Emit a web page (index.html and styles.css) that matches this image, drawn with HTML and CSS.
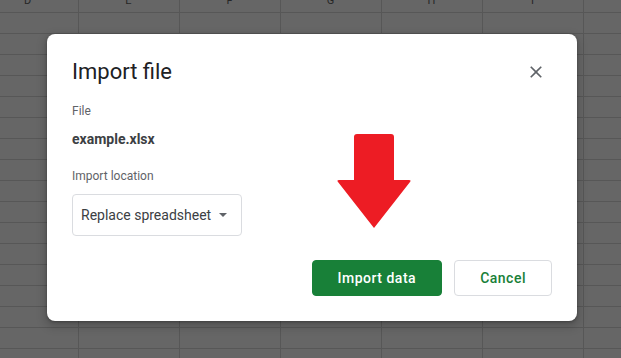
FILE: index.html
```html
<!DOCTYPE html>
<html lang="en">
<head>
    <meta charset="UTF-8">
    <meta name="viewport" content="width=device-width, initial-scale=1.0">
    <title>Import file</title>
    <link rel="stylesheet" href="styles.css">
</head>
<body>
    <div class="sheet">
        <div class="col-headers">
            <div class="col-head">D</div>
            <div class="col-head">E</div>
            <div class="col-head">F</div>
            <div class="col-head">G</div>
            <div class="col-head">H</div>
            <div class="col-head">I</div>
            <div class="col-head">J</div>
        </div>
    </div>

    <div class="dialog">
        <div class="dialog-header">
            <h1>Import file</h1>
            <button class="close-button" aria-label="Close">
                <svg width="20" height="20" viewBox="0 0 24 24" fill="#5f6368">
                    <path d="M19 6.41L17.59 5 12 10.59 6.41 5 5 6.41 10.59 12 5 17.59 6.41 19 12 13.41 17.59 19 19 17.59 13.41 12z"/>
                </svg>
            </button>
        </div>

        <div class="field-label">File</div>
        <div class="file-name">example.xlsx</div>

        <div class="field-label location-label">Import location</div>
        <div class="select-box">
            <span>Replace spreadsheet</span>
            <span class="caret"></span>
        </div>

        <div class="dialog-actions">
            <button class="primary-button">Import data</button>
            <button class="secondary-button">Cancel</button>
        </div>

        <!-- annotation arrow pointing at the import button -->
        <svg class="arrow" width="76" height="96" viewBox="0 0 76 96">
            <path d="M21 1H55Q58 1 58 4V47H73Q75.5 47 74 49L38 95L2 49Q0.5 47 3 47H18V4Q18 1 21 1Z" fill="#ed1c24"/>
        </svg>
    </div>
</body>
</html>
```

FILE: styles.css
```css
body, html {
    margin: 0;
    padding: 0;
    height: 100%;
    overflow: hidden;
    font-family: Roboto, "Liberation Sans", Arial, sans-serif;
}

.sheet {
    height: 100%;
    background-color: #666666;
    background-image:
        linear-gradient(to right, #575757 1px, transparent 1px),
        linear-gradient(to bottom, #575757 1px, transparent 1px);
    background-size: 101px 100%, 100% 21px;
    background-position: 78px 0, 0 12px;
}

.col-headers {
    display: flex;
    height: 12px;
    margin-left: -23px;
}

.col-head {
    flex: 0 0 101px;
    text-align: center;
    font-size: 11px;
    line-height: 1px;
    color: #262626;
}

.dialog {
    position: absolute;
    left: 47px;
    top: 34px;
    width: 530px;
    box-sizing: border-box;
    padding: 24px 25px 25px;
    background-color: white;
    border-radius: 8px;
    box-shadow: 0 4px 8px 3px rgba(0, 0, 0, 0.15), 0 1px 3px rgba(0, 0, 0, 0.3);
    display: flex;
    flex-direction: column;
}

.dialog-header {
    display: flex;
    justify-content: space-between;
    align-items: center;
    height: 28px;
}

.dialog-header h1 {
    margin: 0;
    font-size: 22px;
    font-weight: 400;
    line-height: 28px;
    color: #202124;
}

.close-button {
    width: 32px;
    height: 32px;
    padding: 0;
    border: none;
    background: none;
    display: flex;
    justify-content: center;
    align-items: center;
    cursor: pointer;
}

.field-label {
    margin-top: 17px;
    font-size: 12px;
    line-height: 16px;
    color: #5f6368;
}

.location-label {
    margin-top: 19px;
}

.file-name {
    margin-top: 10px;
    font-size: 14px;
    font-weight: 700;
    line-height: 20px;
    color: #3c4043;
}

.select-box {
    margin-top: 10px;
    align-self: flex-start;
    height: 42px;
    box-sizing: border-box;
    padding: 0 14px 0 8px;
    border: 1px solid #dadce0;
    border-radius: 4px;
    display: flex;
    align-items: center;
    gap: 8px;
    font-size: 14px;
    line-height: 20px;
    color: #3c4043;
}

.caret {
    width: 0;
    height: 0;
    border-left: 4px solid transparent;
    border-right: 4px solid transparent;
    border-top: 4px solid #5f6368;
}

.dialog-actions {
    margin-top: 24px;
    display: flex;
    justify-content: flex-end;
    gap: 12px;
}

.primary-button, .secondary-button {
    height: 36px;
    padding: 0 25px;
    border-radius: 4px;
    font-family: Roboto, "Liberation Sans", Arial, sans-serif;
    font-size: 14px;
    font-weight: 500;
    letter-spacing: 0.5px;
    cursor: pointer;
}

.primary-button {
    background-color: #188038;
    border: 1px solid #188038;
    color: white;
}

.secondary-button {
    background-color: white;
    border: 1px solid #dadce0;
    color: #188038;
}

.arrow {
    position: absolute;
    left: 289px;
    top: 99px;
}
```
